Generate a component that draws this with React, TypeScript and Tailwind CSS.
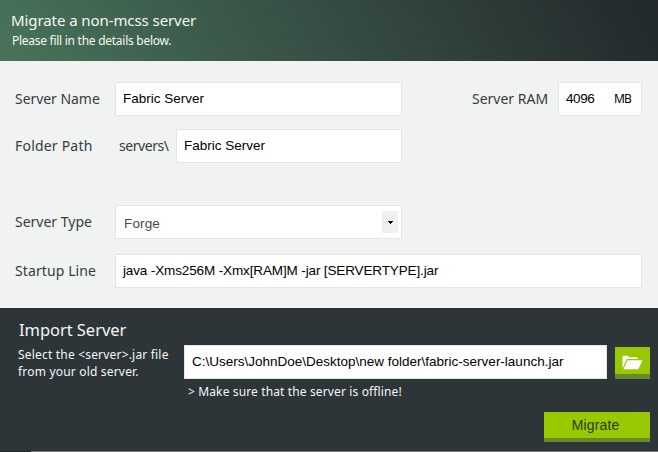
import React from "react";

const label = "whitespace-nowrap text-[#343c40]";
const box = "flex h-[34px] items-center border border-[#e3e5e5] bg-white whitespace-nowrap text-[13.5px] text-black font-['Liberation_Sans',Arial,sans-serif]";

function OpenFolder() {
  return (
    <svg width="21" height="15" viewBox="0 0 21 15" fill="white" aria-hidden="true">
      <path d="M.5.8H6L7 2.2H15.5V4H4.6L1 12.5H.5z" />
      <path d="M5.4 5.2H20.5L16.3 14.3H1.4z" />
    </svg>
  );
}

export default function App() {
  return (
    <main className="flex h-[452px] w-[658px] flex-col overflow-hidden bg-[#f1f3f3] font-['Noto_Sans','Open_Sans',sans-serif]">
      <header className="h-[61px] shrink-0 bg-[linear-gradient(60deg,#48745a_0%,#364d43_50%,#22282b_100%)] pt-[10px] pl-[11px] text-[#f4f7f5]">
        <h1 className="h-5 whitespace-nowrap text-[15px] leading-5 tracking-[-0.08px]">Migrate a non-mcss server</h1>
        <p className="mt-px h-5 whitespace-nowrap pl-px text-[12px] leading-5 tracking-[-0.27px]">Please fill in the details below.</p>
      </header>

      <section className="h-[247px] shrink-0 pt-[21px] pl-[15px] text-[14px] leading-5">
        <div className="flex h-[34px] items-center">
          <label className={`${label} w-[100px] tracking-[-0.05px]`}>Server Name</label>
          <div className={`${box} w-[287px] pl-[7px]`}><span>Fabric Server</span></div>
          <label className={`${label} ml-[70px] w-[86px]`}>Server RAM</label>
          <div className={`${box} w-[84px] pl-[7px]`}>
            <span className="w-12 tracking-[-0.4px]">4096</span>
            <span className="font-['Noto_Sans',sans-serif] text-[12px] tracking-[-0.8px]">MB</span>
          </div>
        </div>
        <div className="mt-[13px] flex h-[34px] items-center">
          <label className={`${label} w-[104px] tracking-[0.2px]`}>Folder Path</label>
          <span className={`${label} w-[57px] tracking-[-0.45px]`}>servers\</span>
          <div className={`${box} w-[226px] pl-[7px]`}><span>Fabric Server</span></div>
        </div>
        <div className="mt-[42px] flex h-[34px] items-center">
          <label className={`${label} w-[100px]`}>Server Type</label>
          <div className={`${box} w-[287px] justify-between pr-[3px] pl-2`}>
            <span className="pt-[3px] tracking-[0.15px] text-[#3f4b4f]">Forge</span>
            <span className="flex h-[22px] w-4 items-center justify-center bg-[#f0f0f0]">
              <svg width="5" height="3" viewBox="0 0 5 3" shapeRendering="crispEdges"><path d="M0 0h5v1H4v1H3v1H2V2H1V1H0z" /></svg>
            </span>
          </div>
        </div>
        <div className="mt-[15px] flex h-[34px] items-center">
          <label className={`${label} w-[100px] tracking-[0.1px]`}>Startup Line</label>
          <div className={`${box} w-[527px] pl-[7px]`}><span className="tracking-[-0.13px]">java -Xms256M -Xmx[RAM]M -jar [SERVERTYPE].jar</span></div>
        </div>
      </section>

      <section className="h-[143px] shrink-0 bg-[#2d3538] text-[#f4f6f6]">
        <h2 className="ml-[19px] h-[37px] pt-[11px] text-[16.5px] leading-[22px] tracking-[-0.05px]">Import Server</h2>
        <div className="flex h-[34px] pl-[18px]">
          <p className="w-[166px] whitespace-nowrap pt-px text-[12px] leading-[17px] tracking-[0.19px]">Select the &lt;server&gt;.jar file<br />from your old server.</p>
          <div className={`${box} w-[423px] pl-[7px]`}><span>C:\Users\JohnDoe\Desktop\new folder\fabric-server-launch.jar</span></div>
          <button className="mt-[2px] ml-2 flex h-8 w-[35px] items-center justify-center border-b-[5px] border-[#678a2d] bg-[#98c900] pt-[3px]"><OpenFolder /></button>
        </div>
        <p className="mt-[3px] ml-[188px] h-5 whitespace-nowrap text-[12px] leading-5 tracking-[0.13px]">&gt; Make sure that the server is offline!</p>
        <button className="mt-[10px] ml-[544px] flex h-[30px] w-[106px] items-center justify-center border-b-4 border-[#678a2d] bg-[#98c900] pr-[3px] font-['Liberation_Sans',Arial,sans-serif] text-[14px] tracking-[0.15px] text-[#2d3a16]">Migrate</button>
      </section>
      <div className="flex h-px shrink-0 bg-[#707374]"><div className="w-[31px] bg-[#22272a]" /></div>
    </main>
  );
}
